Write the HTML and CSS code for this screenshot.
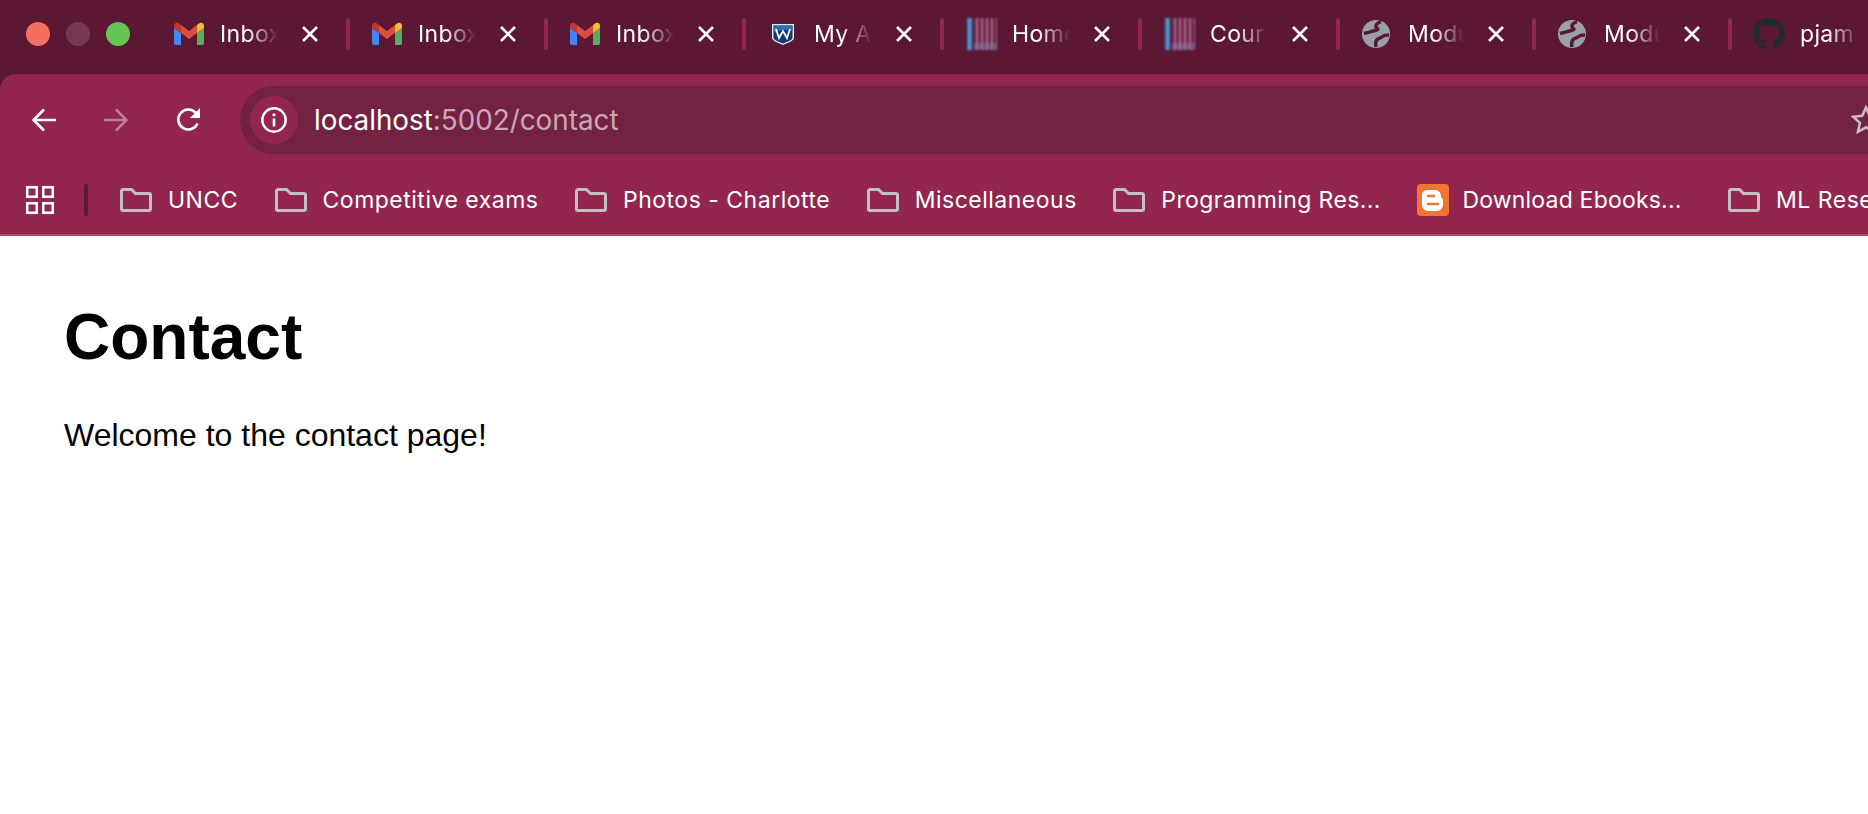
FILE: index.html
```html
<!DOCTYPE html>
<html lang="en">
<head>
  <meta charset="UTF-8">
  <meta name="viewport" content="width=device-width, initial-scale=1.0">
  <title>Contact</title>
  <link rel="stylesheet" href="styles.css">
</head>
<body>
  <svg class="sprites" width="0" height="0">
    <symbol id="gmail" viewBox="0 0 30 24">
      <path d="M2 23h5V11L0 6v15a2 2 0 0 0 2 2z" fill="#4285f4"/>
      <path d="M23 23h5a2 2 0 0 0 2-2V6l-7 5z" fill="#5cab5f"/>
      <path d="M23 3v8l7-5V4c0-3-3-4-5-2.600z" fill="#f4c02f"/>
      <path d="M7 11V3l8 6 8-6v8l-8 6z" fill="#dc4d3e"/>
      <path d="M0 4v2l7 5V3L5 1.400C3-.000 0 1 0 4z" fill="#c0392b"/>
    </symbol>
    <symbol id="globe" viewBox="0 0 28 28">
      <circle cx="14" cy="14" r="14" fill="#9aa0a6"/>
      <path d="M19 1.500C14 3 12.500 6.500 15.500 8.500C17.500 10 12 10.500 2 13.500M14 27C13 22 14 19 18 18C21 17 20 15 27 15" fill="none" stroke="#5b1733" stroke-width="3.400"/>
    </symbol>
    <symbol id="folder" viewBox="0 0 32 24">
      <path d="M1.500 21V3a1.500 1.500 0 0 1 1.500-1.500h8.500l4 4H29a1.500 1.500 0 0 1 1.500 1.500v14a1.500 1.500 0 0 1-1.500 1.500H3A1.500 1.500 0 0 1 1.500 21z" fill="none" stroke="#c4bfc1" stroke-width="3"/>
    </symbol>
    <symbol id="close" viewBox="0 0 20 20">
      <path d="M3 3l14 14M17 3L3 17" fill="none" stroke="#fff" stroke-width="2.600"/>
    </symbol>
    <symbol id="blur-icon" viewBox="0 0 32 32">
      <rect x="9" width="23" height="32" fill="url(#blur-stripes)"/>
      <rect x="9" y="25" width="23" height="7" fill="#8088b8" opacity=".45"/>
      <rect x="1" width="7" height="32" fill="url(#blur-blue)"/>
    </symbol>
    <defs>
      <pattern id="blur-stripes" width="5" height="32" patternUnits="userSpaceOnUse">
        <rect width="5" height="32" fill="#6d2146"/>
        <rect x="1" width="2" height="32" fill="#a8708c"/>
      </pattern>
      <linearGradient id="blur-blue" x1="0" x2="1" y1="0" y2="0">
        <stop offset="0" stop-color="#0f2f66"/>
        <stop offset=".5" stop-color="#7fa8d8"/>
        <stop offset="1" stop-color="#14386f"/>
      </linearGradient>
    </defs>
  </svg>

  <header class="chrome">
    <div class="tabstrip">
      <div class="lights">
        <span class="light red"></span>
        <span class="light grey"></span>
        <span class="light green"></span>
      </div>

      <div class="tab">
        <span class="favicon"><svg class="fav-gmail"><use href="#gmail"/></svg></span>
        <span class="tab-title">Inbox (12)</span>
        <svg class="tab-close"><use href="#close"/></svg>
        <span class="tab-sep"></span>
      </div>
      <div class="tab">
        <span class="favicon"><svg class="fav-gmail"><use href="#gmail"/></svg></span>
        <span class="tab-title">Inbox (3)</span>
        <svg class="tab-close"><use href="#close"/></svg>
        <span class="tab-sep"></span>
      </div>
      <div class="tab">
        <span class="favicon"><svg class="fav-gmail"><use href="#gmail"/></svg></span>
        <span class="tab-title">Inbox (7)</span>
        <svg class="tab-close"><use href="#close"/></svg>
        <span class="tab-sep"></span>
      </div>
      <div class="tab">
        <span class="favicon">
          <svg class="fav-shield" viewBox="0 0 22 22">
            <path d="M0 1h22v14c0 3-7 5-11 7C7 20 0 18 0 15z" fill="#dfe9f2"/>
            <path d="M1.500 2.500h19V15c0 2-6 4-9.500 5.500C7.500 19 1.500 17 1.500 15z" fill="#123a70"/>
            <path d="M1.500 2.500h19V8c-6-2-13-2-19 2z" fill="#2a6fb0"/>
            <path d="M4 6l3 9 4-7 4 7 3-9" fill="none" stroke="#fff" stroke-width="1.800"/>
          </svg>
        </span>
        <span class="tab-title">My Account</span>
        <svg class="tab-close"><use href="#close"/></svg>
        <span class="tab-sep"></span>
      </div>
      <div class="tab">
        <span class="favicon"><svg class="fav-blur"><use href="#blur-icon"/></svg></span>
        <span class="tab-title">Home</span>
        <svg class="tab-close"><use href="#close"/></svg>
        <span class="tab-sep"></span>
      </div>
      <div class="tab">
        <span class="favicon"><svg class="fav-blur"><use href="#blur-icon"/></svg></span>
        <span class="tab-title">Course</span>
        <svg class="tab-close"><use href="#close"/></svg>
        <span class="tab-sep"></span>
      </div>
      <div class="tab tab-narrow">
        <span class="favicon"><svg class="fav-globe"><use href="#globe"/></svg></span>
        <span class="tab-title">Module</span>
        <svg class="tab-close"><use href="#close"/></svg>
        <span class="tab-sep"></span>
      </div>
      <div class="tab tab-narrow">
        <span class="favicon"><svg class="fav-globe"><use href="#globe"/></svg></span>
        <span class="tab-title">Module</span>
        <svg class="tab-close"><use href="#close"/></svg>
        <span class="tab-sep"></span>
      </div>
      <div class="tab tab-narrow">
        <span class="favicon">
          <svg class="fav-github" viewBox="0 0 16 16">
            <path fill="#24292e" d="M8 0C3.580 0 0 3.580 0 8c0 3.540 2.290 6.530 5.470 7.590.4.070.55-.17.55-.38 0-.19-.01-.82-.01-1.490-2.010.37-2.530-.49-2.690-.94-.09-.23-.48-.94-.82-1.130-.28-.15-.68-.52-.01-.53.63-.01 1.080.58 1.230.82.72 1.210 1.870.87 2.330.66.070-.52.28-.87.51-1.070-1.780-.2-3.640-.89-3.640-3.950 0-.87.31-1.590.82-2.150-.08-.2-.36-1.020.08-2.120 0 0 .67-.21 2.200.82.64-.18 1.320-.27 2-.27s1.360.09 2 .27c1.530-1.040 2.200-.82 2.200-.82.44 1.100.16 1.920.08 2.120.51.56.82 1.270.82 2.150 0 3.070-1.870 3.750-3.650 3.950.29.25.54.73.54 1.480 0 1.070-.01 1.930-.01 2.200 0 .21.15.46.55.38A8.013 8.013 0 0 0 16 8c0-4.420-3.580-8-8-8z"/>
          </svg>
        </span>
        <span class="tab-title">pjam</span>
        <svg class="tab-close"><use href="#close"/></svg>
      </div>
    </div>

    <div class="toolbar">
      <div class="nav-row">
        <svg class="nav-icon" viewBox="0 0 24 24"><path d="M24 12H2M12 1.500L1.500 12 12 22.500" fill="none" stroke="#fff" stroke-width="2.600"/></svg>
        <svg class="nav-icon nav-fwd" viewBox="0 0 24 24"><path d="M0 12h22M12 1.500L22.500 12 12 22.500" fill="none" stroke="#c27d9b" stroke-width="2.600"/></svg>
        <svg class="nav-icon nav-reload" viewBox="0 0 24 24"><path d="M20.500 15.500A10 10 0 1 1 18.500 4.500L21 7" fill="none" stroke="#fff" stroke-width="2.600"/><path d="M23 0v10H13z" fill="#fff"/></svg>

        <div class="omnibox">
          <span class="site-info">
            <svg viewBox="0 0 26 26" width="26" height="26"><circle cx="13" cy="13" r="11.700" fill="none" stroke="#fff" stroke-width="2.400"/><path d="M13 11.500V19.500" stroke="#fff" stroke-width="2.600"/><circle cx="13" cy="7.800" r="1.600" fill="#fff"/></svg>
          </span>
          <span class="url">localhost<span class="url-rest">:5002/contact</span></span>
          <svg class="star" viewBox="0 0 30 30"><path d="M15 2.500l3.800 8.300 9 1-6.700 6.100 1.900 8.900L15 22.300l-8 4.500 1.900-8.900L2.200 11.800l9-1z" fill="none" stroke="#c4bfc1" stroke-width="2.600"/></svg>
        </div>
      </div>

      <nav class="bookmarks">
        <svg class="apps" viewBox="0 0 28 28"><path d="M1.250 1.250h9.500v9.500h-9.500zM17.250 1.250h9.500v9.500h-9.500zM1.250 17.250h9.500v9.500h-9.500zM17.250 17.250h9.500v9.500h-9.500z" fill="none" stroke="#fff" stroke-width="2.500"/></svg>
        <span class="bm-sep"></span>
        <div class="bm-list">
          <a class="bm"><svg class="bm-folder"><use href="#folder"/></svg>UNCC</a>
          <a class="bm"><svg class="bm-folder"><use href="#folder"/></svg>Competitive exams</a>
          <a class="bm"><svg class="bm-folder"><use href="#folder"/></svg>Photos - Charlotte</a>
          <a class="bm"><svg class="bm-folder"><use href="#folder"/></svg>Miscellaneous</a>
          <a class="bm bm-prog"><svg class="bm-folder"><use href="#folder"/></svg>Programming Res...</a>
          <a class="bm bm-blogger">
            <svg class="blogger" viewBox="0 0 32 32">
              <rect width="32" height="32" rx="4" fill="#f07530"/>
              <path d="M11 6h7a6 6 0 0 1 6 6v1c0 1.500 2 1 2 3v5a6 6 0 0 1-6 6h-9a6 6 0 0 1-6-6V11a5 5 0 0 1 5-5z" fill="#fff"/>
              <path d="M11 12h6M11 20h10" stroke="#f07530" stroke-width="2.400" stroke-linecap="round"/>
            </svg>
            Download Ebooks...
          </a>
          <a class="bm"><svg class="bm-folder"><use href="#folder"/></svg>ML Research</a>
        </div>
      </nav>
    </div>
  </header>

  <main class="page">
    <h1>Contact</h1>
    <p>Welcome to the contact page!</p>
  </main>
</body>
</html>
```

FILE: styles.css
```css
html, body {
  margin: 0;
  height: 100%;
  overflow: hidden;
  background-color: white;
}
body {
  font-family: "Liberation Sans", Arial, sans-serif;
  color: black;
}
.sprites {
  position: absolute;
}

/* tabs */
.chrome {
  font-family: Inter, "Noto Sans", sans-serif;
  color: white;
  background-color: #5b1733;
}
.tabstrip {
  display: flex;
  align-items: center;
  height: 74px;
  padding-left: 26px;
  padding-bottom: 6px;
  box-sizing: border-box;
  white-space: nowrap;
  overflow: hidden;
}
.lights {
  display: flex;
  gap: 16px;
  width: 126px;
  flex: none;
}
.light {
  width: 24px;
  height: 24px;
  border-radius: 50%;
}
.red { background-color: #f46f60; }
.grey { background-color: #753a52; }
.green { background-color: #61c654; }
.tab {
  display: flex;
  align-items: center;
  flex: none;
  width: 198px;
  height: 32px;
  padding-left: 21px;
  box-sizing: border-box;
}
.tab-narrow {
  width: 196px;
}
.favicon {
  display: flex;
  justify-content: center;
  align-items: center;
  flex: none;
  width: 32px;
  height: 32px;
  margin-right: 15px;
}
.fav-gmail {
  width: 30px;
  height: 24px;
  margin-left: -1px;
}
.fav-shield {
  width: 22px;
  height: 22px;
}
.fav-blur {
  width: 32px;
  height: 32px;
  filter: blur(0.9px);
}
.fav-globe {
  width: 28px;
  height: 28px;
  margin-left: -2px;
}
.fav-github {
  width: 32px;
  height: 32px;
}
.tab-title {
  flex: 1;
  min-width: 0;
  overflow: hidden;
  font-size: 23px;
  letter-spacing: 0.35px;
  -webkit-mask-image: linear-gradient(to right, black 45%, transparent 100%);
  mask-image: linear-gradient(to right, black 45%, transparent 100%);
}
.tab-close {
  flex: none;
  width: 20px;
  height: 20px;
  margin-left: 22px;
  margin-right: 26px;
}
.tab-sep {
  flex: none;
  width: 4px;
  height: 32px;
  border-radius: 2px;
  background-color: #93264f;
}

/* toolbar */
.toolbar {
  background-color: #93264f;
  border-top-left-radius: 16px;
  border-bottom: 2px solid #a84d70;
}
.nav-row {
  display: flex;
  align-items: center;
  height: 86px;
  padding: 12px 0 6px 32px;
  box-sizing: border-box;
}
.nav-icon {
  flex: none;
  width: 24px;
  height: 24px;
  margin-right: 48px;
}
.nav-fwd {
  margin-right: 49px;
}
.nav-reload {
  margin-right: 39px;
}
.omnibox {
  display: flex;
  align-items: center;
  flex: 1;
  height: 68px;
  padding-left: 10px;
  border-radius: 34px 0 0 34px;
  background-color: #732241;
}
.site-info {
  display: flex;
  justify-content: center;
  align-items: center;
  flex: none;
  width: 48px;
  height: 48px;
  margin-right: 16px;
  border-radius: 50%;
  background-color: #93264f;
}
.url {
  flex: 1;
  font-size: 27.8px;
}
.url-rest {
  color: #c9a7b7;
}
.star {
  flex: none;
  width: 30px;
  height: 30px;
  margin-right: -13px;
}

/* bookmarks */
.bookmarks {
  display: flex;
  align-items: center;
  height: 74px;
  padding-left: 26px;
  padding-top: 5px;
  box-sizing: border-box;
  overflow: hidden;
}
.apps {
  flex: none;
  width: 28px;
  height: 28px;
}
.bm-sep {
  flex: none;
  width: 4px;
  height: 32px;
  margin: 0 32px 0 30px;
  border-radius: 2px;
  background-color: #5b1733;
}
.bm-list {
  display: flex;
  align-items: center;
  gap: 36.5px;
}
.bm {
  display: flex;
  align-items: center;
  flex: none;
  gap: 16px;
  font-size: 23px;
  letter-spacing: 0.5px;
  white-space: nowrap;
}
.bm-prog {
  letter-spacing: 0.4px;
}
.bm-blogger {
  gap: 13px;
  margin-right: 10px;
  letter-spacing: 0.2px;
}
.bm-folder {
  flex: none;
  width: 32px;
  height: 24px;
}
.blogger {
  flex: none;
  width: 32px;
  height: 32px;
}

/* page */
.page {
  padding: 64px 64px;
}
h1 {
  margin: 0 0 43px;
  font-size: 64px;
  font-weight: bold;
}
p {
  margin: 0;
  font-size: 32px;
}
```
